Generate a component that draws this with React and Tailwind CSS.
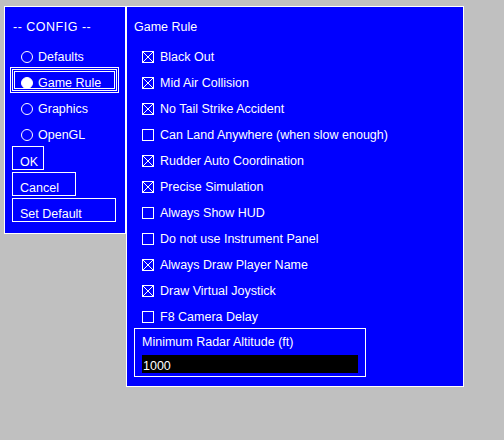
import React from "react";

const font = { fontFamily: '"Liberation Sans", Arial, sans-serif' };

function Check({ on }) {
  return (
    <svg width="12" height="12" viewBox="0 0 12 12" className="shrink-0" shapeRendering="crispEdges">
      <rect x="0.5" y="0.5" width="11" height="11" fill="none" stroke="#fff" strokeWidth="1" />
      {on && (
        <>
          <line x1="1" y1="1" x2="11" y2="11" stroke="#fff" strokeWidth="1" />
          <line x1="11" y1="1" x2="1" y2="11" stroke="#fff" strokeWidth="1" />
        </>
      )}
    </svg>
  );
}

function Radio({ on }) {
  return (
    <svg width="12" height="12" viewBox="0 0 12 12" className="shrink-0">
      <circle cx="6" cy="6" r="5.5" fill={on ? "#fff" : "none"} stroke="#fff" strokeWidth="1" />
    </svg>
  );
}

const radios = [
  ["Defaults", false],
  ["Game Rule", true],
  ["Graphics", false],
  ["OpenGL", false],
];

const checks = [
  ["Black Out", true],
  ["Mid Air Collision", true],
  ["No Tail Strike Accident", true],
  ["Can Land Anywhere (when slow enough)", false],
  ["Rudder Auto Coordination", true],
  ["Precise Simulation", true],
  ["Always Show HUD", false],
  ["Do not use Instrument Panel", false],
  ["Always Draw Player Name", true],
  ["Draw Virtual Joystick", true],
  ["F8 Camera Delay", false],
];

export default function App() {
  return (
    <div
      className="w-[504px] h-[440px] bg-[#c0c0c0] flex items-start pl-[4px] pt-[6px] text-white text-[12.5px] leading-[14px]"
      style={font}
    >
      <div className="w-[122px] h-[228px] bg-[#0000ff] border border-white flex flex-col pt-[13px]">
        <div className="pl-[8px] h-[14px] whitespace-nowrap tracking-[0.5px]">-- CONFIG --</div>
        <div className="mt-[10px] flex flex-col">
          {radios.map(([label, on]) =>
            on ? (
              <div
                key={label}
                className="ml-[5px] w-[109px] h-[26px] mt-[-3px] mb-[3px] flex items-center gap-[5px] pt-[6px] pl-[10px] border border-white shadow-[inset_0_0_0_1px_#0000ff,inset_0_0_0_2px_#fff,inset_0_0_0_3px_#0000ff,inset_0_0_0_4px_#fff]"
              >
                <Radio on={on} />
                <span className="whitespace-nowrap">{label}</span>
              </div>
            ) : (
              <div key={label} className="ml-[5px] w-[109px] h-[26px] flex items-center gap-[5px] pl-[11px]">
                <Radio on={on} />
                <span className="whitespace-nowrap">{label}</span>
              </div>
            )
          )}
        </div>
        <div className="mt-[-2px] ml-[7px] flex flex-col items-start gap-[2px]">
          <div className="w-[32px] h-[24px] border border-white pt-[8px] pl-[7px] whitespace-nowrap">OK</div>
          <div className="w-[64px] h-[24px] border border-white pt-[8px] pl-[7px] whitespace-nowrap">Cancel</div>
          <div className="w-[104px] h-[24px] border border-white pt-[8px] pl-[7px] whitespace-nowrap">Set Default</div>
        </div>
      </div>
      <div className="w-[338px] h-[381px] bg-[#0000ff] border border-white flex flex-col pt-[13px]">
        <div className="pl-[7px] h-[14px] whitespace-nowrap">Game Rule</div>
        <div className="mt-[10px] flex flex-col">
          {checks.map(([label, on]) => (
            <div key={label} className="h-[26px] flex items-center pl-[15px] gap-[6px]">
              <Check on={on} />
              <span className="whitespace-nowrap">{label}</span>
            </div>
          ))}
        </div>
        <div className="mt-[-2px] ml-[7px] w-[232px] h-[49px] border border-white flex flex-col pt-[6px] pl-[7px]">
          <div className="h-[14px] whitespace-nowrap">Minimum Radar Altitude (ft)</div>
          <div className="mt-[6px] w-[216px] h-[18px] bg-black pt-[4px] pl-[1px] whitespace-nowrap">1000</div>
        </div>
      </div>
    </div>
  );
}
